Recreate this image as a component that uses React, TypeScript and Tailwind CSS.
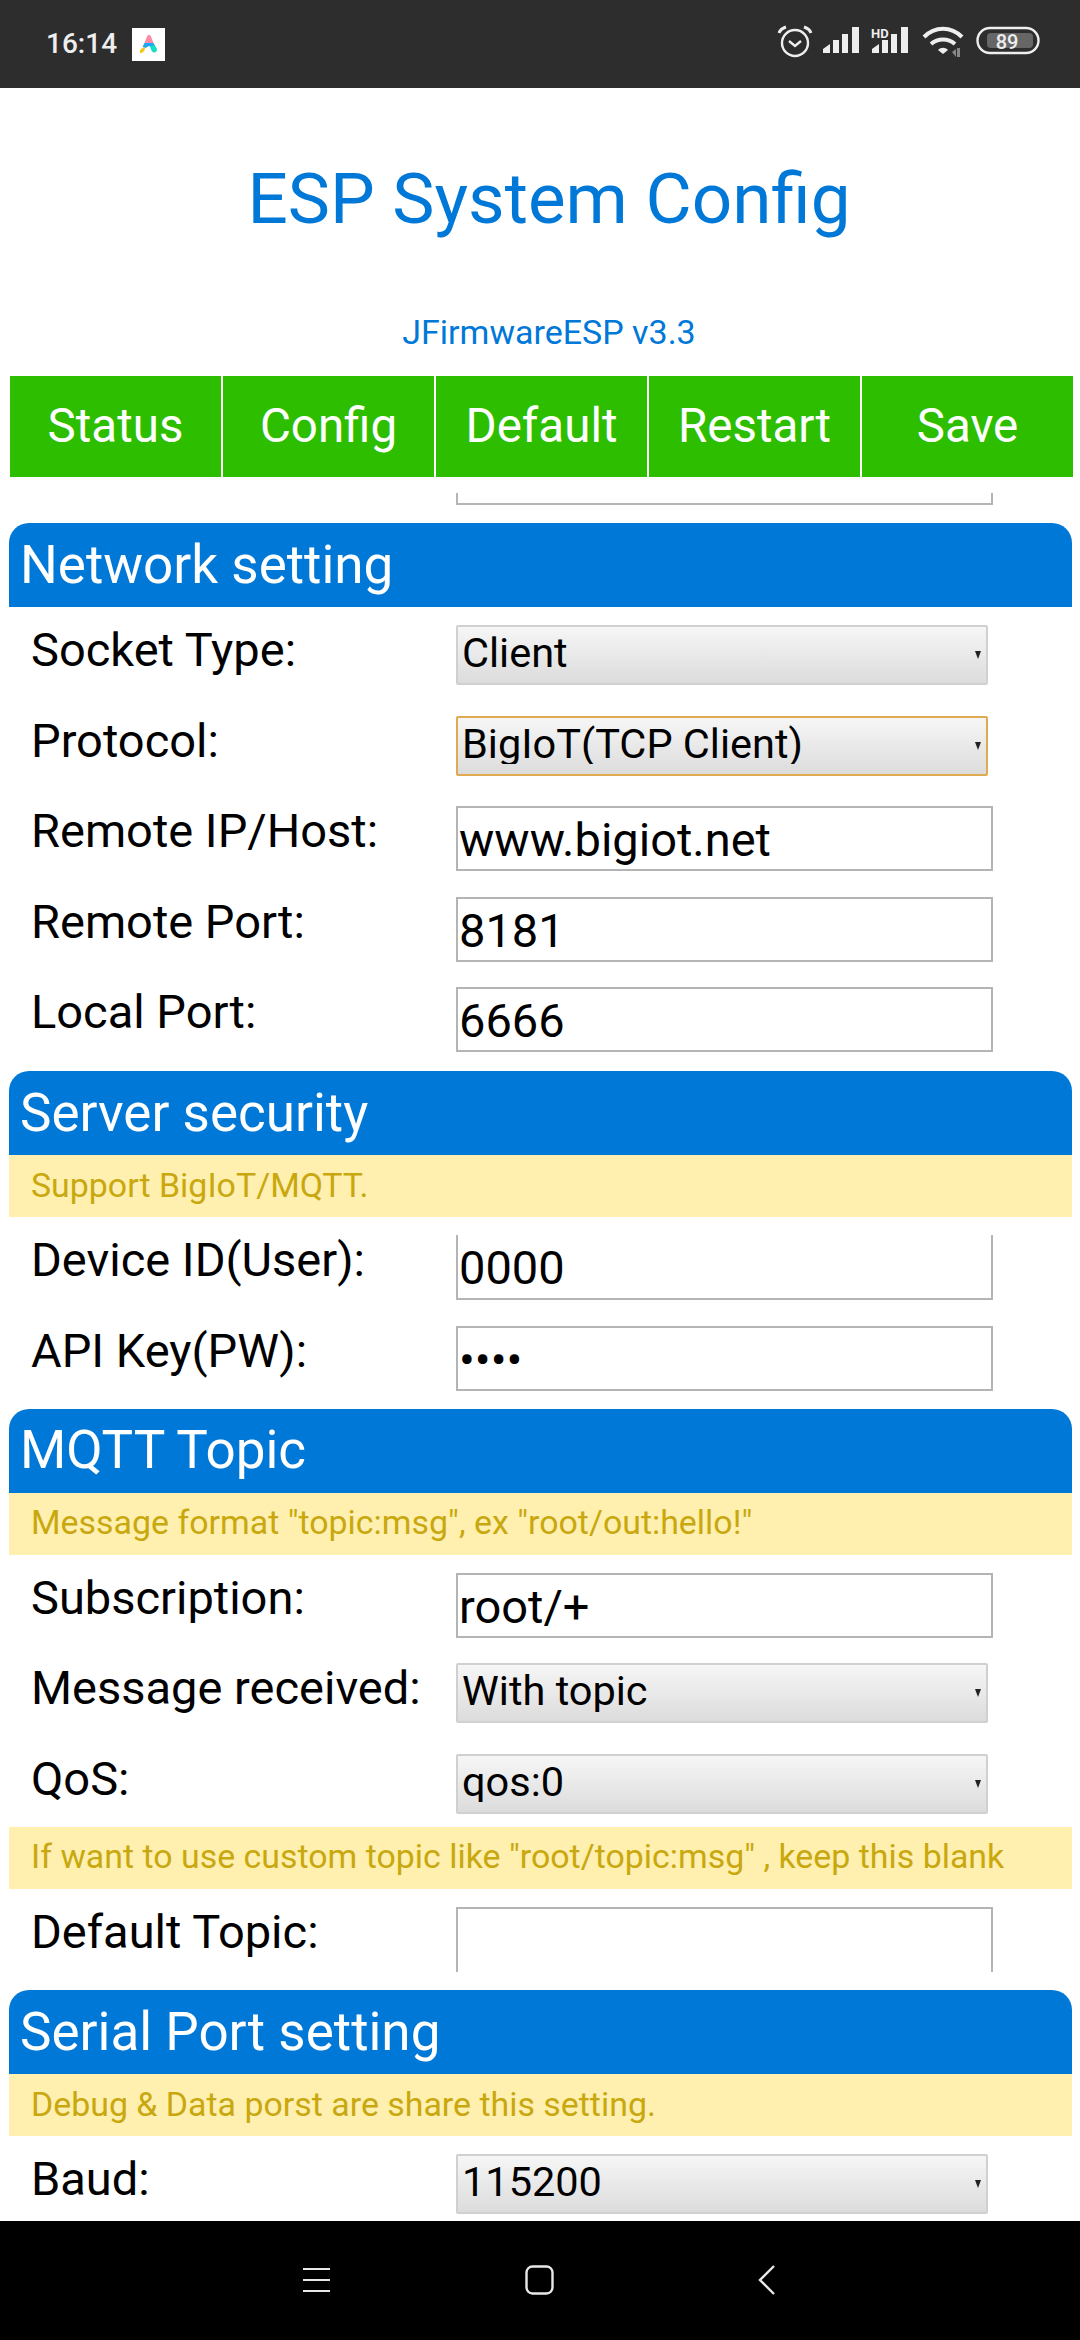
import React from "react";

const font = { fontFamily: "Roboto, sans-serif" };

function Bars({ x }: { x: number }) {
  return (
    <g fill="#eeeeee">
      <path d={`M${x} 53v-4l7-5v9z`} />
      <rect x={x + 10} y="40" width="6" height="13" />
      <rect x={x + 19} y="34" width="6" height="19" />
      <rect x={x + 29} y="27" width="7" height="26" />
    </g>
  );
}

function StatusBar() {
  return (
    <div className="relative flex h-[88px] shrink-0 items-center bg-[#2d2d2d] pl-[46px]">
      <span className="text-[28px] font-medium leading-none text-[#eeeeee]">16:14</span>
      <div className="ml-[15px] flex h-[33px] w-[33px] items-center justify-center bg-white">
        <svg width="20" height="20" viewBox="0 0 20 20">
          <path d="M10 1c1 0 1.500.5 2 1.500L14.500 9H5.500L8 2.500C8.500 1.500 9 1 10 1z" fill="#ff8aa5" />
          <path d="M5.500 9h9l2 3.500-3 1.500-3.500-2-3.500 2-3-1z" fill="#1ea7f5" />
          <path d="M11 12.500c2-1.500 4-1.500 5.500 0 2.500 2.500 1.500 6-1.500 6-2 0-3-3-4-6z" fill="#19dcc6" />
          <path d="M1 19c-.8-3 1.500-5.500 5-5.500 0 3-2 6-5 5.500z" fill="#f5c518" />
        </svg>
      </div>
      <svg className="absolute left-[770px] top-0" width="310" height="88" viewBox="770 0 310 88">
        <g fill="none" stroke="#eeeeee" strokeWidth="2.400">
          <circle cx="795" cy="43" r="13" />
          <path d="M789 41l6 5 6-5" />
          <path d="M779 33c1-3 4-5 7-6M811 33c-1-3-4-5-7-6" strokeWidth="3" />
        </g>
        <Bars x={823} />
        <Bars x={872} />
        <text x="871" y="38" fill="#eeeeee" fontSize="13" fontWeight="700" fontFamily="Roboto, sans-serif">HD</text>
        <g fill="none" stroke="#eeeeee" strokeWidth="4">
          <path d="M924 37c11-11 27-11 38 0" />
          <path d="M931 44c7-6 17-6 24 0" />
        </g>
        <path d="M938 50c3-3 7-3 10 0l-5 4z" fill="#eeeeee" />
        <path d="M952 52l4-3v8zM957 48h3v9h-3z" fill="#888888" />
        <rect x="977.500" y="28" width="61" height="25" rx="12.500" fill="none" stroke="#eeeeee" strokeWidth="2.400" />
        <rect x="987" y="33" width="46" height="15" rx="4" fill="#666666" />
        <text x="1007" y="49" textAnchor="middle" fill="#eeeeee" fontSize="20" fontWeight="500" fontFamily="Roboto, sans-serif">89</text>
      </svg>
    </div>
  );
}

function NavBar() {
  return (
    <div className="flex h-[119px] shrink-0 items-center bg-black pb-[2px] pl-[303px]">
      <svg width="27" height="26" viewBox="0 0 27 26" fill="none" stroke="#e8e8e8" strokeWidth="2.200">
        <path d="M0 2h27M0 13h27M0 24h27" />
      </svg>
      <svg className="ml-[195px]" width="29" height="30" viewBox="0 0 29 30" fill="none" stroke="#e8e8e8" strokeWidth="2.400">
        <rect x="1.500" y="1.500" width="26" height="27" rx="6" />
      </svg>
      <svg className="ml-[204px]" width="18" height="30" viewBox="0 0 18 30" fill="none" stroke="#e8e8e8" strokeWidth="2.400">
        <path d="M16 1 2 15l14 14" />
      </svg>
    </div>
  );
}

function Header({ title }: { title: string }) {
  return (
    <div className="flex h-[84px] items-center rounded-t-[20px] bg-[#0078d7] pl-[11px] pt-[1px] text-[53px] text-white">
      {title}
    </div>
  );
}

function Note({ text, mb = "mb-[18px]" }: { text: string; mb?: string }) {
  return (
    <div className={`flex h-[62px] items-center bg-[#fff0b0] pl-[22px] text-[33.900px] text-[#c9a80f] ${mb}`}>{text}</div>
  );
}

function Row({
  label,
  children,
  mb = "mb-[25.5px]",
}: {
  label: string;
  children: React.ReactNode;
  mb?: string;
}) {
  return (
    <div className={`flex h-[65px] items-start ${mb}`}>
      <div className="w-[447px] shrink-0 pl-[22px] text-[47px] leading-[50px] text-black">{label}</div>
      {children}
    </div>
  );
}

function Input({ value, type = "text", edge = "" }: { value: string; type?: string; edge?: string }) {
  return (
    <input
      readOnly
      type={type}
      value={value}
      className={`h-[65px] w-[537px] border-2 border-[#b4b4b4] bg-white pl-[1px] pt-[4px] text-[47px] text-black outline-none ${edge}`}
      style={font}
    />
  );
}

function Select({ value, focused = false }: { value: string; focused?: boolean }) {
  return (
    <div className="relative h-[60px] w-[532px]">
      <select
        defaultValue={value}
        className={`h-[60px] w-[532px] appearance-none rounded-[2px] border-2 bg-gradient-to-b from-[#f6f6f6] to-[#dcdcdc] pb-[4px] pl-[4px] text-[41.500px] leading-none text-black outline-none ${
          focused ? "border-[#e0aa50]" : "border-[#d0d0d0]"
        }`}
        style={font}
      >
        <option>{value}</option>
      </select>
      <svg className="absolute right-[7px] top-[26px]" width="6" height="8" viewBox="0 0 6 8">
        <path d="M0 0h6L3 8z" fill="#222222" />
      </svg>
    </div>
  );
}

const menu = ["Status", "Config", "Default", "Restart", "Save"];

export default function App() {
  return (
    <div className="flex h-[2340px] w-[1080px] flex-col overflow-hidden bg-white" style={font}>
      <StatusBar />
      <h1 className="mt-[65px] h-[157px] shrink-0 pl-[18px] text-center text-[71px] font-normal leading-[92px] text-[#0078d7]">
        ESP System Config
      </h1>
      <div className="h-[64px] shrink-0 pl-[18px] text-center text-[34px] leading-[44px] text-[#0078d7]">JFirmwareESP v3.3</div>
      <div className="ml-[10px] mt-[2px] flex h-[101px] shrink-0 gap-[2px]">
        {menu.map((m) => (
          <div key={m} className="flex w-[211px] items-center justify-center bg-[#2dbe00] text-[47.500px] text-white">
            {m}
          </div>
        ))}
      </div>
      <main className="flex-1 overflow-hidden pl-[9px] pr-[8px]">
        <div className="mb-[18px] flex h-[28px] items-end overflow-hidden pl-[447px]">
          <div className="h-[12px] w-[537px] shrink-0 border-x-2 border-b-2 border-[#b4b4b4]" />
        </div>
        <Header title="Network setting" />
        <div className="h-[18px]" />
        <Row label="Socket Type:"><Select value="Client" /></Row>
        <Row label="Protocol:"><Select value="BigIoT(TCP Client)" focused /></Row>
        <Row label="Remote IP/Host:"><Input value="www.bigiot.net" /></Row>
        <Row label="Remote Port:"><Input value="8181" /></Row>
        <Row label="Local Port:" mb="mb-[19px]"><Input value="6666" /></Row>

        <Header title="Server security" />
        <Note text="Support BigIoT/MQTT." />
        <Row label="Device ID(User):"><Input value="0000" edge="border-t-0" /></Row>
        <Row label="API Key(PW):" mb="mb-[18px]"><Input type="password" value="0000" /></Row>

        <Header title="MQTT Topic" />
        <Note text={'Message format "topic:msg", ex "root/out:hello!"'} />
        <Row label="Subscription:"><Input value="root/+" /></Row>
        <Row label="Message received:"><Select value="With topic" /></Row>
        <Row label="QoS:" mb="mb-[8px]"><Select value="qos:0" /></Row>
        <Note text={'If want to use custom topic like "root/topic:msg" , keep this blank'} />
        <Row label="Default Topic:" mb="mb-[18.5px]"><Input value="" edge="border-b-0" /></Row>

        <Header title="Serial Port setting" />
        <Note text="Debug & Data porst are share this setting." />
        <Row label="Baud:"><Select value="115200" /></Row>
      </main>
      <NavBar />
    </div>
  );
}
